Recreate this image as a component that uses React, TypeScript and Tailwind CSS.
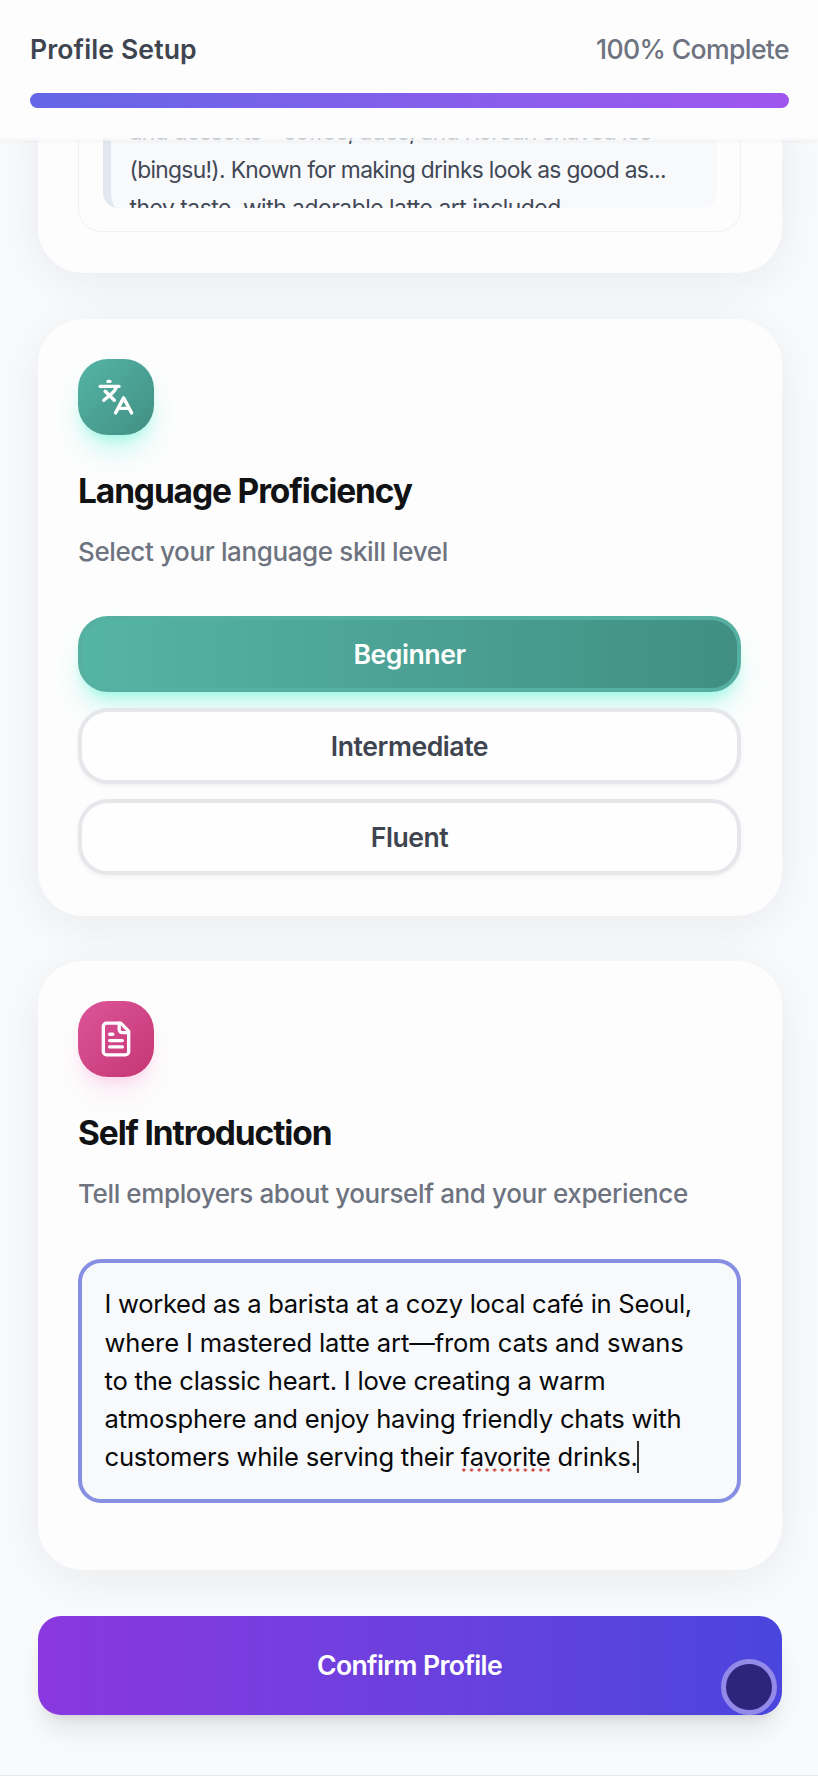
import type { ReactNode } from "react";

const levels = ["Beginner", "Intermediate", "Fluent"];

const introLines = [
  { text: "I worked as a barista at a cozy local café in Seoul,", spacing: "tracking-[-0.3px]" },
  { text: "where I mastered latte art—from cats and swans", spacing: "tracking-[-0.13px]" },
  { text: "to the classic heart. I love creating a warm", spacing: "tracking-[-0.22px]" },
  { text: "atmosphere and enjoy having friendly chats with", spacing: "tracking-[-0.21px]" },
];

function TranslateIcon() {
  return (
    <svg className="size-[38px]" viewBox="0 0 38 38" fill="none" stroke="currentColor" strokeWidth="3.4" strokeLinecap="round" strokeLinejoin="round">
      <path d="M11 3.4h1.9" />
      <path d="M3.2 8.400h18.800" />
      <path d="M19.300 9.200c-1 3-3.500 5.600-6.500 8l-6 5.100" />
      <path d="M8.200 13.200l9.100 9.100" />
      <path d="M18.600 34.900l8-15 8 15" />
      <path d="M21.600 30.400h10" />
    </svg>
  );
}

function DocumentIcon() {
  return (
    <svg className="size-[38px]" viewBox="0 0 24 24" fill="none" stroke="currentColor" strokeWidth="2.1" strokeLinecap="round" strokeLinejoin="round">
      <path d="M15 2H6a2 2 0 0 0-2 2v16a2 2 0 0 0 2 2h12a2 2 0 0 0 2-2V7Z" />
      <path d="M14 2v4a2 2 0 0 0 2 2h4" />
      <path d="M10 9H8M16 13H8M16 17H8" />
    </svg>
  );
}

function Card({ icon, iconClass, title, subtitle, className, children }: { icon: ReactNode; iconClass: string; title: string; subtitle: string; className: string; children: ReactNode }) {
  return (
    <section className={`mt-[45.5px] rounded-[45px] bg-[#fdfdfd] px-[40.5px] pt-10 shadow-[0_10px_48px_rgba(17,24,39,0.065)] ${className}`}>
      <div className={`flex size-[76px] items-center justify-center rounded-[30px] bg-linear-to-br text-white ${iconClass}`}>{icon}</div>
      <h2 className="mt-[36px] text-[33.5px] leading-10 font-bold tracking-[-1.13px] text-[#111214]">{title}</h2>
      <p className="mt-[23px] text-[26px] leading-9 font-medium tracking-[-0.38px] text-[#6d737f]">{subtitle}</p>
      {children}
    </section>
  );
}

export default function App() {
  return (
    <div className="flex h-[1776px] w-full flex-col overflow-hidden border-b border-[#e6e7e8] bg-[#f9fafc] font-['Inter',sans-serif] antialiased">
      <header className="relative z-10 h-[141px] shrink-0 border-b-[3px] border-[#f8f8f9]/75 bg-[#fdfdfd] bg-clip-padding px-[30px] pt-[30.5px] shadow-[0_1px_3px_rgba(0,0,0,0.04)]">
        <div className="flex items-center justify-between text-[26.6px] leading-9">
          <h1 className="font-semibold tracking-[0.1px] text-[#3f4550]">Profile Setup</h1>
          <span className="-mr-px font-medium tracking-[-0.64px] text-[#6d737f]">100% Complete</span>
        </div>
        <div className="-mr-px mt-[26.5px] h-[15px] rounded-full bg-linear-to-r from-[#6366e6] to-[#9f56ef]" />
      </header>

      <main className="-mt-[41px] flex flex-col pr-[36.5px] pl-[37.5px]">
        <section className="h-[173px] rounded-b-[45px] bg-[#fdfdfd] px-[40.5px] shadow-[0_10px_48px_rgba(17,24,39,0.065)]">
          <div className="h-[132px] rounded-b-[23px] border-[1.5px] border-t-0 border-[#f0f1f8] px-[23.5px]">
            <div className="h-[108px] overflow-hidden rounded-b-[15px] border-l-[8px] border-[#e2e8f0] bg-[#f8f9fb] pt-[13px] pl-[19px] text-[22.8px] leading-[38px] tracking-[-0.68px] whitespace-nowrap text-[#414855]">
              <p className="tracking-[-0.66px]">and desserts—coffee, ades, and Korean shaved ice</p>
              <p>(bingsu!). Known for making drinks look as good as...</p>
              <p className="tracking-[-0.46px]">they taste, with adorable latte art included.</p>
            </div>
          </div>
        </section>

        <Card
          icon={<TranslateIcon />}
          iconClass="from-[#55b5a5] to-[#418f83] shadow-[0_19px_28px_-6px_#99f6e499,0_8px_12px_-6px_#99f6e4]"
          title="Language Proficiency"
          subtitle="Select your language skill level"
          className="h-[597px]"
        >
          <div className="mt-[46.5px] flex flex-col gap-[15.5px]">
            {levels.map((level) => (
              <button
                key={level}
                className={
                  level === "Beginner"
                    ? "h-[76px] rounded-[30px] border-[4px] border-[#56b0a2] bg-linear-to-r from-[#55b5a5] to-[#418f83] pt-[2px] text-[26.6px] font-semibold tracking-[-0.45px] text-white shadow-[0_19px_28px_-6px_#99f6e499,0_8px_12px_-6px_#99f6e4]"
                    : "h-[76px] rounded-[30px] border-[4px] border-[#e5e7eb] bg-[#fefefe] pt-[2px] text-[26.6px] font-semibold tracking-[-0.45px] text-[#3f4550] shadow-[0_2px_4px_rgba(0,0,0,0.05)]"
                }
              >
                {level}
              </button>
            ))}
          </div>
        </Card>

        <Card
          icon={<DocumentIcon />}
          iconClass="from-[#dc559a] to-[#c53573] shadow-[0_19px_28px_-6px_#fbcfe880,0_8px_12px_-6px_#fbcfe8]"
          title="Self Introduction"
          subtitle="Tell employers about yourself and your experience"
          className="h-[609px]"
        >
          <div className="mt-[46.5px] h-[244px] rounded-[23px] border-[4px] border-[#868fe2] bg-[#f8f9fb] pt-[22.8px] pl-[22.5px] text-[25.6px] leading-[38.2px] whitespace-nowrap text-[#08090a]">
            {introLines.map((line) => (
              <p key={line.text} className={line.spacing}>{line.text}</p>
            ))}
            <p className="flex items-center tracking-[-0.24px]">
              <span className="whitespace-pre">customers while serving their </span>
              <span className="relative">
                favorite
                <span className="absolute bottom-[4px] -left-[1px] h-[4px] w-full bg-[radial-gradient(circle,#cf4a45_1.3px,transparent_1.9px)] bg-[length:7.7px_4px]" />
              </span>
              <span className="whitespace-pre"> drinks.</span>
              <span className="-ml-px h-8 w-[2px] bg-[#333]" />
            </p>
          </div>
        </Card>

        <button className="relative mt-[45.5px] h-[99px] rounded-[23px] bg-linear-to-r from-[#8a37df] to-[#4945dd] pt-[2px] text-[26.6px] font-semibold tracking-[-0.62px] text-white shadow-[0_19px_28px_-6px_rgba(0,0,0,0.1),0_8px_12px_-8px_rgba(0,0,0,0.12)]">
          Confirm Profile
          <span className="absolute right-[5px] bottom-0 size-[56px] rounded-full border-[5px] border-[#9389e9] bg-[#2d257b]" />
        </button>
      </main>
    </div>
  );
}
